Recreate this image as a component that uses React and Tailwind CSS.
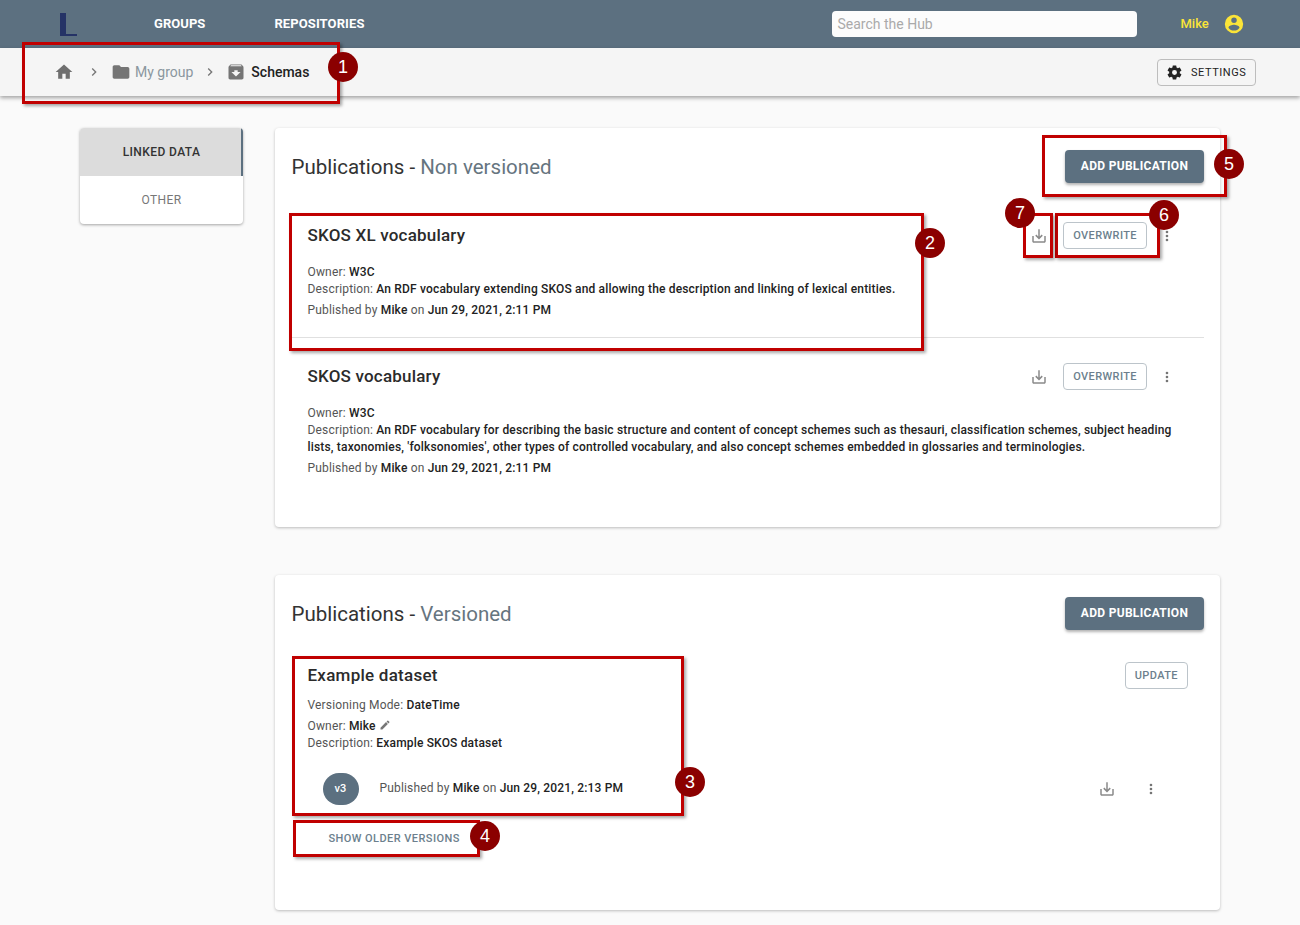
const iconPaths = {
  home: "M10 20v-6h4v6h5v-8h3L12 3 2 12h3v8z",
  folder: "M10 4H4c-1.1 0-1.99.9-1.99 2L2 18c0 1.1.9 2 2 2h16c1.1 0 2-.9 2-2V8c0-1.1-.9-2-2-2h-8l-2-2z",
  archive: "M20.54 5.23l-1.39-1.68C18.88 3.21 18.47 3 18 3H6c-.47 0-.88.21-1.16.55L3.46 5.23C3.17 5.57 3 6.02 3 6.5V19c0 1.1.9 2 2 2h14c1.1 0 2-.9 2-2V6.5c0-.48-.17-.93-.46-1.27zM12 17.5L6.5 12H10v-2h4v2h3.5L12 17.5zM5.12 5l.81-1h12l.94 1H5.12z",
  chevron: "M8.59 16.59L13.17 12 8.59 7.41 10 6l6 6-6 6z",
  cog: "M12,15.5A3.5,3.5 0 0,1 8.5,12A3.5,3.5 0 0,1 12,8.5A3.5,3.5 0 0,1 15.5,12A3.5,3.5 0 0,1 12,15.5M19.43,12.97C19.47,12.65 19.5,12.33 19.5,12C19.5,11.67 19.47,11.34 19.43,11L21.54,9.37C21.73,9.22 21.78,8.95 21.66,8.73L19.66,5.27C19.54,5.05 19.27,4.96 19.05,5.05L16.56,6.05C16.04,5.66 15.5,5.32 14.87,5.07L14.5,2.42C14.46,2.18 14.25,2 14,2H10C9.75,2 9.54,2.18 9.5,2.42L9.13,5.07C8.5,5.32 7.96,5.66 7.44,6.05L4.95,5.05C4.73,4.96 4.46,5.05 4.34,5.27L2.34,8.73C2.21,8.95 2.27,9.22 2.46,9.37L4.57,11C4.53,11.34 4.5,11.67 4.5,12C4.5,12.33 4.53,12.65 4.57,12.97L2.46,14.63C2.27,14.78 2.21,15.05 2.34,15.27L4.34,18.73C4.46,18.95 4.73,19.03 4.95,18.95L7.44,17.94C7.96,18.34 8.5,18.68 9.13,18.93L9.5,21.58C9.54,21.82 9.75,22 10,22H14C14.25,22 14.46,21.82 14.5,21.58L14.87,18.93C15.5,18.67 16.04,18.34 16.56,17.94L19.05,18.95C19.27,19.03 19.54,18.95 19.66,18.73L21.66,15.27C21.78,15.05 21.73,14.78 21.54,14.63L19.43,12.97Z",
  account: "M12,19.2C9.5,19.2 7.29,17.92 6,16C6.03,14 10,12.9 12,12.9C14,12.9 17.97,14 18,16C16.71,17.92 14.5,19.2 12,19.2M12,5A3,3 0 0,1 15,8A3,3 0 0,1 12,11A3,3 0 0,1 9,8A3,3 0 0,1 12,5M12,2A10,10 0 0,0 2,12A10,10 0 0,0 12,22A10,10 0 0,0 22,12A10,10 0 0,0 12,2Z",
  download: "M19 12v7H5v-7H3v7c0 1.1.9 2 2 2h14c1.1 0 2-.9 2-2v-7h-2zm-6 .67l2.59-2.58L17 11.5l-5 5-5-5 1.41-1.41L11 12.67V3h2z",
  dots: "M12,16A2,2 0 0,1 14,18A2,2 0 0,1 12,20A2,2 0 0,1 10,18A2,2 0 0,1 12,16M12,10A2,2 0 0,1 14,12A2,2 0 0,1 12,14A2,2 0 0,1 10,12A2,2 0 0,1 12,10M12,4A2,2 0 0,1 14,6A2,2 0 0,1 12,8A2,2 0 0,1 10,6A2,2 0 0,1 12,4Z",
  pencil: "M20.71,7.04C21.1,6.65 21.1,6 20.71,5.63L18.37,3.29C18,2.9 17.35,2.9 16.96,3.29L15.12,5.12L18.87,8.87M3,17.25V21H6.75L17.81,9.93L14.06,6.18L3,17.25Z",
}

function Icon({name, className}) {
  return (
    <svg viewBox="0 0 24 24" className={className} fill="currentColor">
      <path d={iconPaths[name]}/>
    </svg>
  )
}

function AddButton() {
  return (
    <button className="h-[33px] w-[139px] rounded bg-[#5c7080] pb-[2px] text-xs font-bold tracking-[0.3px] text-white shadow-[0_2px_3px_rgba(0,0,0,0.3)]">
      ADD PUBLICATION
    </button>
  )
}

function OutlineButton({children}) {
  return (
    <button className="h-[27px] rounded border border-[#bcc4ca] px-[9px] pt-[2px] text-[11px] font-medium tracking-[0.4px] text-[#6c7f8d]">
      {children}
    </button>
  )
}

function Publication({title, description, divider}) {
  return (
    <div className={divider ? "border-b border-[#e0e0e0] pb-[18px]" : ""}>
      <div className="flex h-[27px] items-center pl-4">
        <h3 className="flex-1 text-[17px] font-medium leading-none tracking-[0.2px] text-[#2b2b2b]">{title}</h3>
        <Icon name="download" className="mr-[15px] h-[18px] w-[18px] text-[#8a8a8a]"/>
        <OutlineButton>OVERWRITE</OutlineButton>
        <Icon name="dots" className="ml-[12px] mr-[29px] h-[16px] w-[16px] text-[#757575]"/>
      </div>
      <div className="mt-[15px] pl-4 pr-[18px] text-xs leading-[17px] tracking-[0.17px] text-[#555]">
        <div>Owner: <b className="font-medium text-[#222]">W3C</b></div>
        <div>Description: <b className="font-medium text-[#222]">{description}</b></div>
        <div className="mt-1">
          Published by <b className="font-medium text-[#222]">Mike</b> on <b className="font-medium text-[#222]">Jun 29, 2021, 2:11 PM</b>
        </div>
      </div>
    </div>
  )
}

const callouts = [
  {n: 1, cls: "left-[22px] top-[42px] h-[62px] w-[318px]"},
  {n: 2, cls: "left-[289px] top-[213px] h-[138px] w-[635px]"},
  {n: 3, cls: "left-[292px] top-[656px] h-[160px] w-[392px]"},
  {n: 4, cls: "left-[293px] top-[820px] h-[37px] w-[187px]"},
  {n: 5, cls: "left-[1042px] top-[135px] h-[62px] w-[185px]"},
  {n: 6, cls: "left-[1055px] top-[213px] h-[45px] w-[105px]"},
  {n: 7, cls: "left-[1023px] top-[213px] h-[45px] w-[30px]"},
]

const badges = [
  {n: 1, cls: "left-[328px] top-[52px]"},
  {n: 2, cls: "left-[915px] top-[228px]"},
  {n: 3, cls: "left-[675px] top-[767px]"},
  {n: 4, cls: "left-[470px] top-[821px]"},
  {n: 5, cls: "left-[1214px] top-[149px]"},
  {n: 6, cls: "left-[1149px] top-[200px]"},
  {n: 7, cls: "left-[1005px] top-[198px]"},
]

export default function App() {
  return (
    <div className="relative h-[925px] overflow-hidden bg-[#fafafa] font-['Roboto',sans-serif]">
      <header className="flex h-12 items-center bg-[#5c7080] text-white">
        <div className="ml-[60px] mt-[1px] h-[23px] w-[17px] border-b-2 border-[#253366]">
          <div className="h-full w-[6px] bg-[#253366]"/>
        </div>
        <a className="ml-[77px] text-[13px] font-bold tracking-[0.05px]">GROUPS</a>
        <a className="ml-[69px] text-[13px] font-bold tracking-[0.1px]">REPOSITORIES</a>
        <div className="ml-[467px] flex h-[26px] w-[305px] items-center rounded bg-[#fcfcfc] px-[6px] text-sm text-[#aaa]">Search the Hub</div>
        <span className="ml-[44px] text-[13px] font-medium text-[#fbe438]">Mike</span>
        <Icon name="account" className="ml-[14px] h-[22px] w-[22px] text-[#fbe438]"/>
      </header>

      <div className="flex h-12 items-center bg-[#f5f5f5] pl-[54px] pr-[44px] shadow-[0_2px_4px_rgba(0,0,0,0.35)]">
        <Icon name="home" className="h-[20px] w-[20px] text-[#6f6f6f]"/>
        <Icon name="chevron" className="ml-[12px] h-[16px] w-[16px] text-[#777]"/>
        <Icon name="folder" className="ml-[9px] h-[20px] w-[20px] text-[#757575]"/>
        <span className="ml-[4px] text-sm text-[#8b979f]">My group</span>
        <Icon name="chevron" className="ml-[9px] h-[16px] w-[16px] text-[#777]"/>
        <Icon name="archive" className="ml-[8px] h-[20px] w-[20px] text-[#757575]"/>
        <span className="ml-[5px] text-sm font-medium text-[#222]">Schemas</span>
        <button className="ml-auto flex h-[27px] w-[99px] items-center rounded border border-[#bdbdbd] pl-[8px] text-[11px] tracking-[0.55px] text-[#222]">
          <Icon name="cog" className="mr-[8px] h-[17px] w-[17px] text-[#222]"/>
          <span className="mt-[2px]">SETTINGS</span>
        </button>
      </div>

      <div className="flex items-start pl-20 pt-8">
        <nav className="w-[163px] overflow-hidden rounded bg-white text-xs shadow-[0_1px_3px_rgba(0,0,0,0.35)]">
          <div className="flex h-12 items-center justify-center border-r-2 border-[#5c7080] bg-[#dcdcdc] pl-[2px] font-medium tracking-[0.4px] text-[#333]">LINKED DATA</div>
          <div className="flex h-12 items-center justify-center tracking-[0.4px] text-[#777]">OTHER</div>
        </nav>

        <main className="ml-8 w-[945px]">
          <section className="h-[399px] rounded bg-white pl-[16.5px] pr-4 pt-[22px] shadow-[0_1px_3px_rgba(0,0,0,0.25)]">
            <div className="flex h-[33px] items-center justify-between">
              <h2 className="mt-[2px] text-[20.5px] text-[#333]">Publications - <span className="text-[#66757f]">Non versioned</span></h2>
              <AddButton/>
            </div>
            <div className="mt-[39px]">
              <Publication
                title="SKOS XL vocabulary"
                divider
                description="An RDF vocabulary extending SKOS and allowing the description and linking of lexical entities."
              />
            </div>
            <div className="mt-[25px]">
              <Publication
                title="SKOS vocabulary"
                description="An RDF vocabulary for describing the basic structure and content of concept schemes such as thesauri, classification schemes, subject heading lists, taxonomies, 'folksonomies', other types of controlled vocabulary, and also concept schemes embedded in glossaries and terminologies."
              />
            </div>
          </section>

          <section className="mt-12 h-[335px] rounded bg-white pl-[16.5px] pr-4 pt-[22px] shadow-[0_1px_3px_rgba(0,0,0,0.25)]">
            <div className="flex h-[33px] items-center justify-between">
              <h2 className="mt-[2px] text-[20.5px] text-[#333]">Publications - <span className="text-[#66757f]">Versioned</span></h2>
              <AddButton/>
            </div>
            <div className="mt-[32px] flex items-center justify-between pl-4 pr-4">
              <h3 className="text-[17px] font-medium tracking-[0.25px] text-[#2b2b2b]">Example dataset</h3>
              <OutlineButton>UPDATE</OutlineButton>
            </div>
            <div className="mt-[6px] pl-4 text-xs tracking-[0.17px] text-[#555]">
              <div className="leading-[20px]">Versioning Mode: <b className="font-medium text-[#222]">DateTime</b></div>
              <div className="mt-[1px] flex items-center leading-[20px]">
                <span className="whitespace-pre">Owner: </span><b className="font-medium text-[#222]">Mike</b>
                <Icon name="pencil" className="mb-[3px] ml-[3px] h-[12px] w-[12px] text-[#777]"/>
              </div>
              <div className="leading-[15px]">Description: <b className="font-medium text-[#222]">Example SKOS dataset</b></div>
            </div>
            <div className="mt-[22px] flex items-center pl-[31px] text-xs tracking-[0.17px] text-[#555]">
              <div className="flex h-[32px] w-9 items-center justify-center rounded-full bg-[#5c7080] text-[11px] font-medium text-white">v3</div>
              <span className="mb-[2px] ml-[21px]">Published by <b className="font-medium text-[#222]">Mike</b> on <b className="font-medium text-[#222]">Jun 29, 2021, 2:13 PM</b></span>
              <Icon name="download" className="ml-auto h-[18px] w-[18px] text-[#8a8a8a]"/>
              <Icon name="dots" className="ml-[27px] mr-[45px] h-[16px] w-[16px] text-[#757575]"/>
            </div>
            <button className="ml-[37px] mt-[26px] text-[11px] font-medium tracking-[0.43px] text-[#6c7f8d]">SHOW OLDER VERSIONS</button>
          </section>
        </main>
      </div>

      {callouts.map(c => (
        <div key={c.n} className={`absolute border-[3px] border-[#c00000] shadow-[2px_2px_3px_rgba(0,0,0,0.35)] ${c.cls}`}/>
      ))}
      {badges.map(b => (
        <div key={b.n} className={`absolute flex h-[30px] w-[30px] items-center justify-center rounded-full bg-[#8b0000] font-['Liberation_Sans',sans-serif] text-lg text-white ${b.cls}`}>{b.n}</div>
      ))}
    </div>
  )
}
